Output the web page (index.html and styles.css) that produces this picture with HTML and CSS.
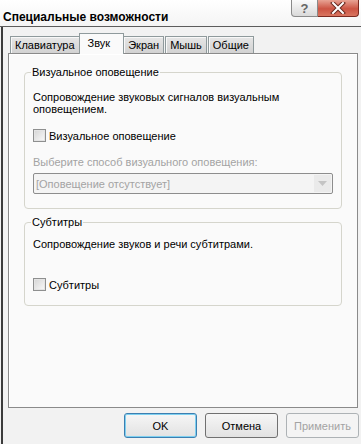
FILE: index.html
```html
<!DOCTYPE html>
<html lang="ru">
<head>
    <meta charset="UTF-8">
    <title>Специальные возможности</title>
    <link rel="stylesheet" href="styles.css">
</head>
<body>
    <!-- Title bar -->
    <div class="titlebar">
        <span class="title">Специальные возможности</span>
        <div class="caption-btns">
            <span class="cap-btn help">?</span>
            <span class="cap-btn close">
                <svg width="16" height="12" viewBox="0 0 16 12">
                    <path d="M3 1 L13 11 M13 1 L3 11" stroke="#6a2a20" stroke-width="4" stroke-linecap="square"/>
                    <path d="M3 1 L13 11 M13 1 L3 11" stroke="#fff" stroke-width="2" stroke-linecap="square"/>
                </svg>
            </span>
        </div>
    </div>

    <!-- Client area -->
    <div class="client">
        <div class="tabs">
            <div class="tab">Клавиатура</div>
            <div class="tab active">Звук</div>
            <div class="tab">Экран</div>
            <div class="tab">Мышь</div>
            <div class="tab">Общие</div>
        </div>

        <div class="panel">
            <fieldset class="group group-visual">
                <legend>Визуальное оповещение</legend>
                <p class="desc">Сопровождение звуковых сигналов визуальным оповещением.</p>
                <label class="check"><span class="box"></span>Визуальное оповещение</label>
                <div class="hint disabled">Выберите способ визуального оповещения:</div>
                <div class="combo">
                    <span class="combo-text">[Оповещение отсутствует]</span>
                    <span class="combo-arrow">
                        <svg width="9" height="5" viewBox="0 0 9 5"><path d="M0 0 H9 L4.5 5 Z" fill="#c4c4c4"/></svg>
                    </span>
                </div>
            </fieldset>

            <fieldset class="group group-captions">
                <legend>Субтитры</legend>
                <p class="desc">Сопровождение звуков и речи субтитрами.</p>
                <label class="check"><span class="box"></span>Субтитры</label>
            </fieldset>
        </div>

        <div class="buttons">
            <button class="btn default">OK</button>
            <button class="btn">Отмена</button>
            <button class="btn" disabled>Применить</button>
        </div>
    </div>
</body>
</html>
```

FILE: styles.css
```css
* {
    box-sizing: border-box;
}

html, body {
    margin: 0;
    height: 100%;
    overflow: hidden;
    background: #f2f2f2;
    font-family: 'Liberation Sans', Arial, sans-serif;
    font-size: 11px;
    color: #000;
}

body {
    display: flex;
    flex-direction: column;
}

/* Title bar */
.titlebar {
    height: 27px;
    flex: none;
    display: flex;
    justify-content: space-between;
    align-items: flex-start;
    background: linear-gradient(#ffffff, #f4f4f4);
    border-bottom: 1px solid #5c5c5c;
}

.title {
    font-weight: bold;
    font-size: 12px;
    padding: 10px 0 0 3px;
}

.caption-btns {
    display: flex;
    margin-right: 2px;
}

.cap-btn {
    height: 17px;
    display: flex;
    align-items: center;
    justify-content: center;
}

.cap-btn.help {
    width: 27px;
    border: 1px solid #8a8a8a;
    border-top: none;
    border-radius: 0 0 0 4px;
    background: linear-gradient(#fbfbfb, #d9d9d9);
    color: #666;
    font-weight: bold;
    font-size: 13px;
}

.cap-btn.close {
    width: 41px;
    border: 1px solid #7c2a20;
    border-top: none;
    border-left: none;
    border-radius: 0 0 4px 0;
    background: linear-gradient(#e8a394, #cc5443 55%, #d97560);
}

/* Client area */
.client {
    flex: 1;
    min-height: 0;
    margin-left: 1px;
    border-left: 2px solid #3c3c3c;
    padding: 6px 2px 0 5px;
}

.tabs {
    display: flex;
    align-items: flex-end;
    height: 20px;
    padding-left: 2px;
    position: relative;
    z-index: 1;
}

.tab {
    height: 17px;
    padding: 2px 4px 0 4px;
    border: 1px solid #8f9a9c;
    border-bottom: none;
    background: linear-gradient(#e6e6e6, #d2d2d2);
    box-shadow: inset 1px 1px 0 #f8f8f8;
    font-size: 11px;
    margin-right: 1px;
}

.tab.active {
    height: 21px;
    padding: 3px 13px 0 8px;
    margin: 0 -1px -1px -2px;
    background: #fafafa;
    box-shadow: none;
    position: relative;
}

.panel {
    width: 350px;
    height: 355px;
    border: 1px solid #8a8a8a;
    box-shadow: inset 1px 1px 0 #fff;
    background: #fafafa;
    padding: 12px 15px 0 15px;
}

.group {
    margin: 0;
    border: 1px solid #d5d5cc;
    border-radius: 4px;
    padding: 0 8px;
}

.group legend {
    padding: 0 1px;
    margin-left: -2px;
    line-height: 13px;
}

.group-visual {
    padding-top: 12px;
    padding-bottom: 14px;
}

.group-captions {
    margin-top: 7px;
    padding-top: 9px;
    padding-bottom: 14px;
}

.desc {
    margin: 0;
    line-height: 12px;
}

.check {
    display: flex;
    align-items: center;
    gap: 3px;
    margin-top: 14px;
    height: 13px;
}

.group-captions .check {
    margin-top: 28px;
}

.box {
    width: 13px;
    height: 13px;
    border: 1px solid #8e8f8f;
    background: linear-gradient(135deg, #d4d4d4, #fafafa);
    box-shadow: inset 0 0 0 1px #e4e4e4;
}

.hint {
    margin-top: 14px;
    line-height: 13px;
}

.disabled {
    color: #a3a3a3;
}

.combo {
    margin-top: 4px;
    height: 21px;
    border: 1px solid #8d8d8d;
    border-radius: 2px;
    background: #f4f4f4;
    display: flex;
    align-items: center;
    justify-content: space-between;
    padding: 0 1px 0 2px;
}

.combo-text {
    color: #a3a3a3;
}

.combo-arrow {
    width: 17px;
    height: 17px;
    background: #eaeaea;
    display: flex;
    align-items: center;
    justify-content: center;
}

/* Dialog buttons */
.buttons {
    display: flex;
    justify-content: flex-end;
    gap: 8px;
    margin-top: 5px;
}

.btn {
    width: 73px;
    height: 25px;
    font-family: 'Liberation Sans', Arial, sans-serif;
    font-size: 11px;
    border: 1px solid #707070;
    border-radius: 3px;
    background: linear-gradient(#f6f6f6, #e2e2e2);
    color: #000;
    padding: 0;
}

.btn.default {
    border-color: #3c7fb1;
    box-shadow: inset 0 0 0 1px #7ed0f0;
}

.btn:disabled {
    border-color: #adb2b5;
    background: #f4f4f4;
    color: #a3a3a3;
}
```
